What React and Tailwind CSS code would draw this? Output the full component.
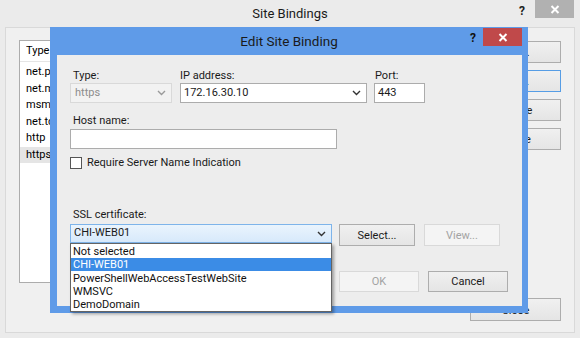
import React from "react";

const Chevron = ({ color = "#333" }) => (
  <svg width="9" height="6" viewBox="0 0 9 6" className="shrink-0">
    <polyline points="1,1 4.5,4.5 8,1" fill="none" stroke={color} strokeWidth="1.4" />
  </svg>
);

const XIcon = () => (
  <svg width="10" height="9" viewBox="0 0 10 9">
    <path d="M1.5 1 L8.5 8 M8.5 1 L1.5 8" stroke="#fff" strokeWidth="2" />
  </svg>
);

const Btn = ({ children, className = "", disabled = false }) => (
  <div
    className={
      "flex items-center justify-center border text-[11px] leading-[13px] " +
      (disabled
        ? "border-[#d9d9d9] bg-[#f4f4f4] text-[#a3a3a3] "
        : "border-[#adadad] bg-gradient-to-b from-[#f0f0f0] to-[#e5e5e5] text-[#1a1a1a] ") +
      className
    }
  >
    {children}
  </div>
);

export default function App() {
  const rows = ["net.pipe", "net.msmq", "msmq.formatname", "net.tcp", "http", "https"];
  return (
    <div
      className="relative h-[338px] w-[580px] overflow-hidden bg-[#ebebeb] text-black"
      style={{ fontFamily: 'Roboto, "Noto Sans", sans-serif' }}
    >
      {/* Background window: Site Bindings */}
      <div className="flex h-full flex-col">
        <div className="grid h-[27px] grid-cols-[1fr_auto_1fr]">
          <div />
          <div className="flex items-center pt-[1px] text-[13px] text-[#1a1a1a]">Site Bindings</div>
          <div className="flex items-start justify-end pr-[6px]">
            <div className="mr-[10px] mt-[2px] text-[12px] font-bold text-[#222]">?</div>
            <div className="flex h-[18px] w-[39px] items-center justify-center bg-[#b1b1b1]">
              <XIcon />
            </div>
          </div>
        </div>
        <div className="mx-[5px] mb-[5px] flex flex-1 flex-col border border-[#d9d9d9] bg-[#f0f0f0] px-[13px] pt-[12px]">
          <div className="flex gap-[12px]">
            <div className="flex h-[243px] flex-1 flex-col border border-[#acacac] bg-white">
              <div className="flex h-[21px] items-center border-b border-[#e5e5e5] pl-[6px] text-[11px]">
                <span className="w-[44px] overflow-hidden text-ellipsis whitespace-nowrap">Type</span>
              </div>
              <div className="mt-[2px] flex flex-col">
                {rows.map((r) => (
                  <div
                    key={r}
                    className={
                      "flex h-[16.5px] items-center pl-[6px] text-[11px] " +
                      (r === "https" ? "bg-[#e5e5e5]" : "")
                    }
                  >
                    <span className="w-[44px] overflow-hidden text-ellipsis whitespace-nowrap">{r}</span>
                  </div>
                ))}
              </div>
            </div>
            <div className="mt-[1px] flex w-[91px] flex-col gap-[7px]">
              <Btn className="h-[22px]">Add...</Btn>
              <Btn className="h-[22px] !border-[#569de5]">Edit...</Btn>
              <Btn className="h-[22px] pr-[6px]">Remove</Btn>
              <Btn className="h-[22px] pr-[6px]">Browse</Btn>
            </div>
          </div>
          <div className="mt-[15px] flex justify-end">
            <Btn className="h-[23px] w-[91px] !items-start pt-[5px]">Close</Btn>
          </div>
        </div>
      </div>

      {/* Foreground window: Edit Site Binding */}
      <div className="absolute left-[50px] top-[27px] flex h-[286px] w-[478px] flex-col bg-[#5f9be8]">
        <div className="grid h-[28px] grid-cols-[1fr_auto_1fr]">
          <div />
          <div className="flex items-center text-[13.5px] text-[#1a1a1a]">Edit Site Binding</div>
          <div className="flex items-start justify-end pr-[6px] pt-[1px]">
            <div className="mr-[7px] mt-[1px] text-[12px] font-bold text-[#111]">?</div>
            <div className="flex h-[18px] w-[39px] items-center justify-center bg-[#c0494a]">
              <XIcon />
            </div>
          </div>
        </div>
        <div className="mb-[7px] ml-[7px] mr-[6px] flex flex-1 flex-col bg-[#ededed] pl-[13px] pt-[13px] text-[11px] text-[#1a1a1a]">
          <div className="flex">
            <div className="flex w-[102px] flex-col">
              <div className="h-[15px] pl-[3px] leading-[15px]">Type:</div>
              <div className="flex h-[20px] items-center justify-between border border-[#d9d9d9] bg-[#f2f2f2] pl-[4px] pr-[5px] text-[#8d8d8d]">
                <span>https</span>
                <Chevron color="#9a9a9a" />
              </div>
            </div>
            <div className="ml-[8px] flex w-[187px] flex-col">
              <div className="h-[15px] leading-[15px]">IP address:</div>
              <div className="flex h-[20px] items-center justify-between border border-[#acacac] bg-white pl-[3px] pr-[5px]">
                <span>172.16.30.10</span>
                <Chevron />
              </div>
            </div>
            <div className="ml-[7px] flex w-[51px] flex-col">
              <div className="h-[15px] pl-[1px] leading-[15px]">Port:</div>
              <div className="flex h-[20px] items-center border border-[#acacac] bg-white pl-[3px]">443</div>
            </div>
          </div>
          <div className="mt-[10px] h-[15px] pl-[3px] leading-[15px]">Host name:</div>
          <div className="mt-[1px] h-[20px] w-[267px] border border-[#acacac] bg-white" />
          <div className="mt-[8px] flex h-[12px] items-center">
            <div className="h-[12px] w-[12px] border border-[#555] bg-white" />
            <span className="ml-[5px] leading-[12px]">Require Server Name Indication</span>
          </div>
          <div className="mt-[38px] h-[15px] pl-[3px] leading-[15px]">SSL certificate:</div>
          <div className="mt-[2px] flex items-start">
            <div className="flex h-[19px] w-[262px] items-center justify-between border border-[#7eb4ea] bg-gradient-to-b from-[#eaf4fd] to-[#d7e9fb] pl-[3px] pr-[5px]">
              <span>CHI-WEB01</span>
              <Chevron />
            </div>
            <Btn className="ml-[7px] h-[22px] w-[76px]">Select...</Btn>
            <Btn disabled className="ml-[9px] h-[22px] w-[76px]">View...</Btn>
          </div>
          <div className="ml-[269px] mt-[25px] flex">
            <Btn disabled className="h-[21px] w-[80px]">OK</Btn>
            <Btn className="ml-[9px] h-[21px] w-[80px]">Cancel</Btn>
          </div>
        </div>
      </div>

      {/* Open dropdown list */}
      <div className="absolute left-[70px] top-[243px] flex h-[69px] w-[262px] flex-col border border-[#646464] bg-white pt-[1px] text-[11px] leading-[13px] text-[#111] shadow-[2px_2px_3px_rgba(0,0,0,0.35)]">
        <div className="flex h-[13.3px] items-center pl-[2px]">Not selected</div>
        <div className="flex h-[13.3px] items-center bg-[#3b8ce6] pl-[2px] text-white">CHI-WEB01</div>
        <div className="flex h-[13.3px] items-center pl-[2px]">PowerShellWebAccessTestWebSite</div>
        <div className="flex h-[13.3px] items-center pl-[2px]">WMSVC</div>
        <div className="flex h-[13.3px] items-center pl-[2px]">DemoDomain</div>
      </div>
    </div>
  );
}
